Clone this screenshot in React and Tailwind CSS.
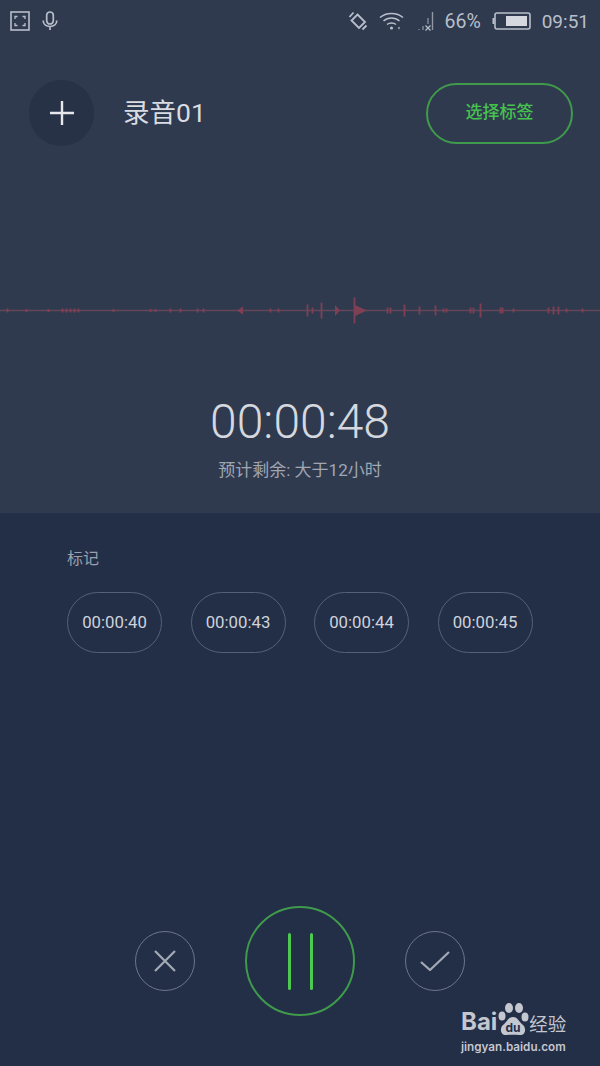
const FONT = { fontFamily: 'Roboto, "Noto Sans CJK SC", sans-serif' };

const StatusBar = () => (
  <div className="flex h-[42px] items-center justify-between pl-[10px] pr-[11px] text-[#b9bfca]">
    <div className="flex items-center gap-[12px]">
      <svg width="20" height="20" viewBox="0 0 20 20" fill="none" stroke="currentColor">
        <rect x="1" y="1" width="18" height="18" strokeWidth="1.6" />
        <path d="M5 8V5.5h2.5M12.5 5.5H15V8M15 12v2.5h-2.5M7.5 14.5H5V12" strokeWidth="1.3" />
      </svg>
      <svg width="16" height="20" viewBox="0 0 16 20" fill="none" stroke="currentColor" strokeWidth="1.7">
        <rect x="4.7" y="1" width="6.6" height="12" rx="3.3" />
        <path d="M1.2 9.5c0 3.8 3 6 6.8 6s6.8-2.2 6.8-6M8 15.5V19" />
      </svg>
    </div>
    <div className="flex items-center">
      <svg width="20" height="20" viewBox="0 0 20 20" fill="none" stroke="currentColor" strokeWidth="1.8" className="mr-[11px] ml-[2px]">
        <path d="M9.500 3.500L17 11l-6 6-7.500-7.500zM1.500 6l4-4.500M14.500 18.500l4-4" />
      </svg>
      <svg width="26" height="20" viewBox="0 0 26 20" fill="none" stroke="currentColor" strokeWidth="1.5" className="mr-[12px]">
        <path d="M1 6.500C7 1 18 1 24 6.500M4.500 10C9 6 16 6 20.500 10M8 13.500c2.500-2 6.500-2 9 0" />
        <circle cx="12.500" cy="17" r="1.600" fill="currentColor" stroke="none" />
        <circle cx="20" cy="17" r="1.200" fill="currentColor" stroke="none" opacity="0.6" />
      </svg>
      <svg width="18" height="22" viewBox="0 0 18 22" fill="none" stroke="currentColor" className="mr-[9px]">
        <path d="M15.500 2v18" strokeWidth="1.400" opacity="0.7" />
        <path d="M11 8v6M2 19v1M6 16v4" strokeWidth="1.400" opacity="0.6" />
        <path d="M8.500 15.500l5 5M13.500 15.500l-5 5" strokeWidth="1.200" />
      </svg>
      <span className="mr-[11px] mt-[2px] text-[19.500px] leading-none">66%</span>
      <svg width="39" height="18" viewBox="0 0 39 18" fill="none" className="mr-[11px]">
        <rect x="3" y="1" width="35" height="16" rx="2" stroke="currentColor" strokeWidth="1.600" />
        <rect x="0.500" y="6" width="2" height="6" fill="currentColor" />
        <rect x="14" y="4" width="21" height="10" fill="#d5d8de" />
      </svg>
      <span className="text-[19px] leading-none">09:51</span>
    </div>
  </div>
);

const Header = () => (
  <div className="mt-[38px] flex items-center justify-between pl-[29px] pr-[27px]">
    <div className="flex items-center gap-[29px]">
      <div className="flex h-[66px] w-[65px] items-center justify-center rounded-full bg-[#273247]">
        <svg width="26" height="26" viewBox="0 0 26 26" stroke="#e6e8ec" strokeWidth="2.400">
          <path d="M13 1v24M1 13h24" />
        </svg>
      </div>
      <span className="text-[26.500px] leading-none text-[#d9dce2]">录音01</span>
    </div>
    <div className="flex h-[61px] w-[147px] items-center justify-center rounded-full border-2 border-[#3f9a4c] text-[17px] font-medium text-[#46c24e]">
      选择标签
    </div>
  </div>
);

// 红色波形：x 位置 + 半高
const BARS = [
  [7, 2], [26, 1.5], [48, 1.5], [62, 2], [66, 2], [70, 2], [74, 2], [78, 2], [113, 1.5], [150, 1.5], [155, 1.5],
  [170, 2], [180, 2], [197, 2], [203, 2], [270, 2], [278, 2],
  [307, 6], [312, 3], [321, 8], [354, 13],
  [387, 3], [390, 3], [404, 6], [419, 4], [435, 5], [443, 2], [446, 2], [470, 3], [473, 3], [480, 7],
  [500, 3], [502, 3], [513, 2], [548, 3], [553, 4], [558, 4], [566, 2], [582, 2],
];

const Waveform = () => (
  <svg width="600" height="40" viewBox="0 0 600 40" className="mt-[144px] block blur-[0.5px]">
    <path d="M0 20.500H600" stroke="#664659" strokeWidth="1.600" />
    <path d="M237 20.500l6-4v8zM335 15l5 5.500-5 5.500zM355 15l12 5.500-12 5.500z" fill="#7f4054" />
    {BARS.map(([x, h]) => (
      <path key={x} d={`M${x}.5 ${20.500 - h}V${20.500 + h}`} stroke="#7f4054" strokeWidth="1.800" />
    ))}
  </svg>
);

const MARKS = ['00:00:40', '00:00:43', '00:00:44', '00:00:45'];

const Marks = () => (
  <div className="pl-[67px] pt-[36px]">
    <div className="text-[16px] leading-[20px] text-[#98a0ae]">标记</div>
    <div className="mt-[23px] flex gap-[28.500px]">
      {MARKS.map((m) => (
        <div
          key={m}
          className="flex h-[61px] w-[95px] items-center justify-center rounded-full border-[1.5px] border-[#566179] text-[16.800px] text-[#cfd3da]"
        >
          {m}
        </div>
      ))}
    </div>
  </div>
);

const Controls = () => (
  <div className="mb-[50px] mt-auto flex items-center justify-center gap-[50px]">
    <div className="flex h-[60px] w-[60px] items-center justify-center rounded-full border-[1.5px] border-[#6d7689]">
      <svg width="24" height="24" viewBox="0 0 24 24" stroke="#a3a9b5" strokeWidth="2.200">
        <path d="M2 2l20 20M22 2L2 22" />
      </svg>
    </div>
    <div className="flex h-[110px] w-[110px] items-center justify-center gap-[19px] rounded-full border-2 border-[#3f9a4c]">
      <div className="h-[57px] w-[3px] rounded-full bg-[#4cc950]" />
      <div className="h-[57px] w-[3px] rounded-full bg-[#4cc950]" />
    </div>
    <div className="flex h-[60px] w-[60px] items-center justify-center rounded-full border-[1.5px] border-[#6d7689]">
      <svg width="30" height="20" viewBox="0 0 30 20" fill="none" stroke="#a3a9b5" strokeWidth="2.200">
        <path d="M1 11l9 8L29 1" />
      </svg>
    </div>
  </div>
);

const Watermark = () => (
  <div className="absolute left-[461px] top-[1002px] w-[108px] text-[#c3c7cf]">
    <div className="flex items-end">
      <span className="mb-[3px] text-[24px] font-bold leading-[26px]" style={{ fontFamily: 'Inter, sans-serif' }}>Bai</span>
      <svg width="32" height="36" viewBox="0 0 32 36" className="shrink-0">
        <g fill="#c3c7cf">
          <ellipse cx="5" cy="14" rx="3.500" ry="4.500" />
          <ellipse cx="12" cy="6" rx="4" ry="5" />
          <ellipse cx="22" cy="6" rx="4" ry="5" />
          <ellipse cx="28" cy="15" rx="3.500" ry="4.500" />
          <path d="M16 15c-5 0-5 4-10 8-4 4-2 11 4 10 4-.5 8-.5 12 0 6 1 8-6 4-10-4-3-5-8-10-8z" />
        </g>
        <text x="16" y="30" textAnchor="middle" fontSize="12" fontWeight="700" fontFamily="Inter, sans-serif" fill="#232e47">du</text>
      </svg>
      <span className="text-[18.500px] leading-[26px]">经验</span>
    </div>
    <div className="mt-[2px] whitespace-nowrap text-[11.700px] font-semibold leading-[14px]" style={{ fontFamily: 'Inter, sans-serif' }}>
      jingyan.baidu.com
    </div>
  </div>
);

export default function App() {
  return (
    <div className="relative flex h-[1066px] w-[600px] flex-col overflow-hidden" style={FONT}>
      <div className="h-[513px] bg-[#2f3a4f]">
        <StatusBar />
        <Header />
        <Waveform />
        <div className="mt-[60px] text-center text-[48px] font-light leading-[64px] text-[#d5d8de]">00:00:48</div>
        <div className="mt-[4px] text-center text-[17px] leading-[24px] text-[#a0a6b2]">预计剩余: 大于12小时</div>
      </div>
      <div className="flex flex-1 flex-col bg-[#232e47]">
        <Marks />
        <Controls />
      </div>
      <Watermark />
    </div>
  );
}
